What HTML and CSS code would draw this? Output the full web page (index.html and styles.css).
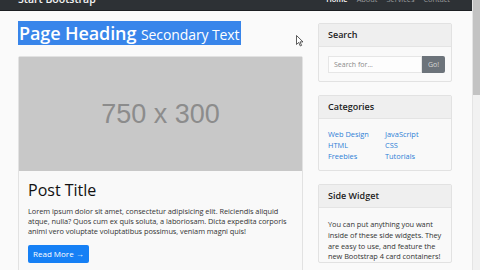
FILE: index.html
```html
<!DOCTYPE html>
<html>
<head>
<meta charset="utf-8">
<link rel="stylesheet" href="styles.css">
</head>
<body>
<div class="window">
  <div class="page">
    <nav class="navbar">
      <div class="brand">Start Bootstrap</div>
      <ul class="nav-links">
        <li class="active">Home</li>
        <li>About</li>
        <li>Services</li>
        <li>Contact</li>
      </ul>
    </nav>
    <div class="container">
      <main class="main">
        <h1 class="page-heading"><span class="sel"><span class="h-main">Page Heading</span> <small>Secondary Text</small></span></h1>
        <article class="card post">
          <div class="placeholder">750 x 300</div>
          <div class="post-body">
            <h2 class="post-title">Post Title</h2>
            <p class="post-text">Lorem ipsum dolor sit amet, consectetur adipisicing elit. Reiciendis aliquid atque, nulla? Quos cum ex quis soluta, a laboriosam. Dicta expedita corporis animi vero voluptate voluptatibus possimus, veniam magni quis!</p>
            <div class="btn-row"><a class="btn-primary">Read More &rarr;</a></div>
          </div>
        </article>
      </main>
      <aside class="sidebar">
        <section class="card widget">
          <h5 class="card-header">Search</h5>
          <div class="card-body search-body">
            <div class="input">Search for...</div>
            <div class="btn-go">Go!</div>
          </div>
        </section>
        <section class="card widget">
          <h5 class="card-header">Categories</h5>
          <div class="card-body cats">
            <ul>
              <li>Web Design</li>
              <li>HTML</li>
              <li>Freebies</li>
            </ul>
            <ul>
              <li>JavaScript</li>
              <li>CSS</li>
              <li>Tutorials</li>
            </ul>
          </div>
        </section>
        <section class="card widget">
          <h5 class="card-header">Side Widget</h5>
          <div class="card-body side-text">You can put anything you want inside of these side widgets. They are easy to use, and feature the new Bootstrap 4 card containers!</div>
        </section>
      </aside>
    </div>
    <svg class="cursor" width="8" height="12" viewBox="0 0 8 12"><path d="M0.5 0.5 L0.5 9.5 L2.7 7.4 L4.3 11 L5.6 10.4 L4 6.9 L7 6.9 Z" fill="#fff" stroke="#333" stroke-width="0.8"/></svg>
  </div>
  <div class="scrollbar"><div class="thumb"></div></div>
</div>
</body>
</html>
```

FILE: styles.css
```css
* { box-sizing: border-box; }
html, body { margin: 0; padding: 0; }
body {
  width: 480px;
  height: 270px;
  overflow: hidden;
  background: #fafafa;
  font-family: "Open Sans", "Noto Sans", sans-serif;
  color: #222;
}
.window { display: flex; width: 480px; height: 270px; }
.page { flex: 1; position: relative; overflow: hidden; background: #fafafa; }
.scrollbar { width: 8px; background: #f1f1f1; border-left: 1px solid #e4e4e4; }
.thumb { height: 95px; background: #c3c3c3; }

.navbar {
  height: 11px;
  background: #2d3135;
  display: flex;
  justify-content: space-between;
  padding: 0 22px 0 18px;
  overflow: hidden;
  border-bottom: 1px solid #1c1f22;
}
.brand {
  color: #f3f3f3;
  font-size: 10.5px;
  line-height: 11px;
  margin-top: -6px;
  font-weight: 600;
}
.nav-links {
  list-style: none;
  margin: -6px 0 0 0;
  padding: 0;
  display: flex;
  gap: 9px;
  font-size: 7.4px;
  line-height: 11px;
  color: #9a9c9e;
}
.nav-links .active { color: #fff; font-weight: 600; }

.container {
  display: flex;
  gap: 15px;
  padding: 0 20px 0 18px;
}
.main { width: 285px; }
.sidebar { width: 134px; padding-top: 12px; display: flex; flex-direction: column; gap: 13px; }

.page-heading {
  margin: 10px 0 11px 0;
  height: 24px;
  line-height: 24px;
  font-size: 18px;
  font-weight: 600;
  color: #fff;
}
.sel { background: #3885ea; display: inline-block; padding: 0 2px 0 1px; height: 24px; }
.h-main { letter-spacing: -0.1px; }
.page-heading small { font-size: 14px; font-weight: 400; letter-spacing: -0.1px; }

.card {
  background: #f9f9f9;
  border: 1px solid #e2e2e2;
  border-radius: 2px;
}
.placeholder {
  height: 114px;
  background: #c8c8c8;
  color: #8c8c8c;
  font-family: "Liberation Sans", Arial, sans-serif;
  font-size: 27px;
  display: flex;
  align-items: center;
  justify-content: center;
}
.post-body { padding: 8px 9px 10px 9px; }
.post-title {
  margin: 0 0 5px 0;
  font-size: 16px;
  font-weight: 500;
  line-height: 22px;
  color: #111;
}
.post-text {
  margin: 0 0 8px 0;
  font-size: 7.4px;
  line-height: 10.2px;
  color: #333;
  letter-spacing: -0.05px;
}
.btn-row { display: flex; }
.btn-primary {
  display: block;
  background: #1680f5;
  color: #fff;
  font-size: 8px;
  line-height: 18px;
  padding: 0 5px;
  border-radius: 2px;
  text-decoration: none;
}

.card-header {
  margin: 0;
  background: #efefef;
  border-bottom: 1px solid #e4e4e4;
  font-size: 9px;
  font-weight: 600;
  line-height: 22px;
  padding: 0 9px;
  color: #222;
}
.card-body { padding: 9px; }
.search-body { display: flex; padding: 9px 6px 8px 9px; }
.input {
  flex: 1;
  height: 17px;
  background: #fdfdfd;
  border: 1px solid #e6e6e6;
  font-size: 7px;
  line-height: 15px;
  padding-left: 5px;
  color: #8a8a8a;
}
.btn-go {
  width: 23px;
  height: 17px;
  background: #6c737a;
  color: #d8d8d8;
  font-size: 7px;
  line-height: 17px;
  text-align: center;
  border-radius: 0 2px 2px 0;
}
.cats { display: flex; padding: 10px 9px 8px 9px; }
.cats ul {
  list-style: none;
  margin: 0;
  padding: 0;
  width: 65px;
  font-size: 7.4px;
  line-height: 11px;
  color: #2f7fd6;
}
.side-text {
  font-size: 7.4px;
  line-height: 10.8px;
  color: #333;
  padding: 11px 9px 0 9px;
  letter-spacing: -0.05px;
}
.cursor { position: absolute; left: 296px; top: 35px; }
```
